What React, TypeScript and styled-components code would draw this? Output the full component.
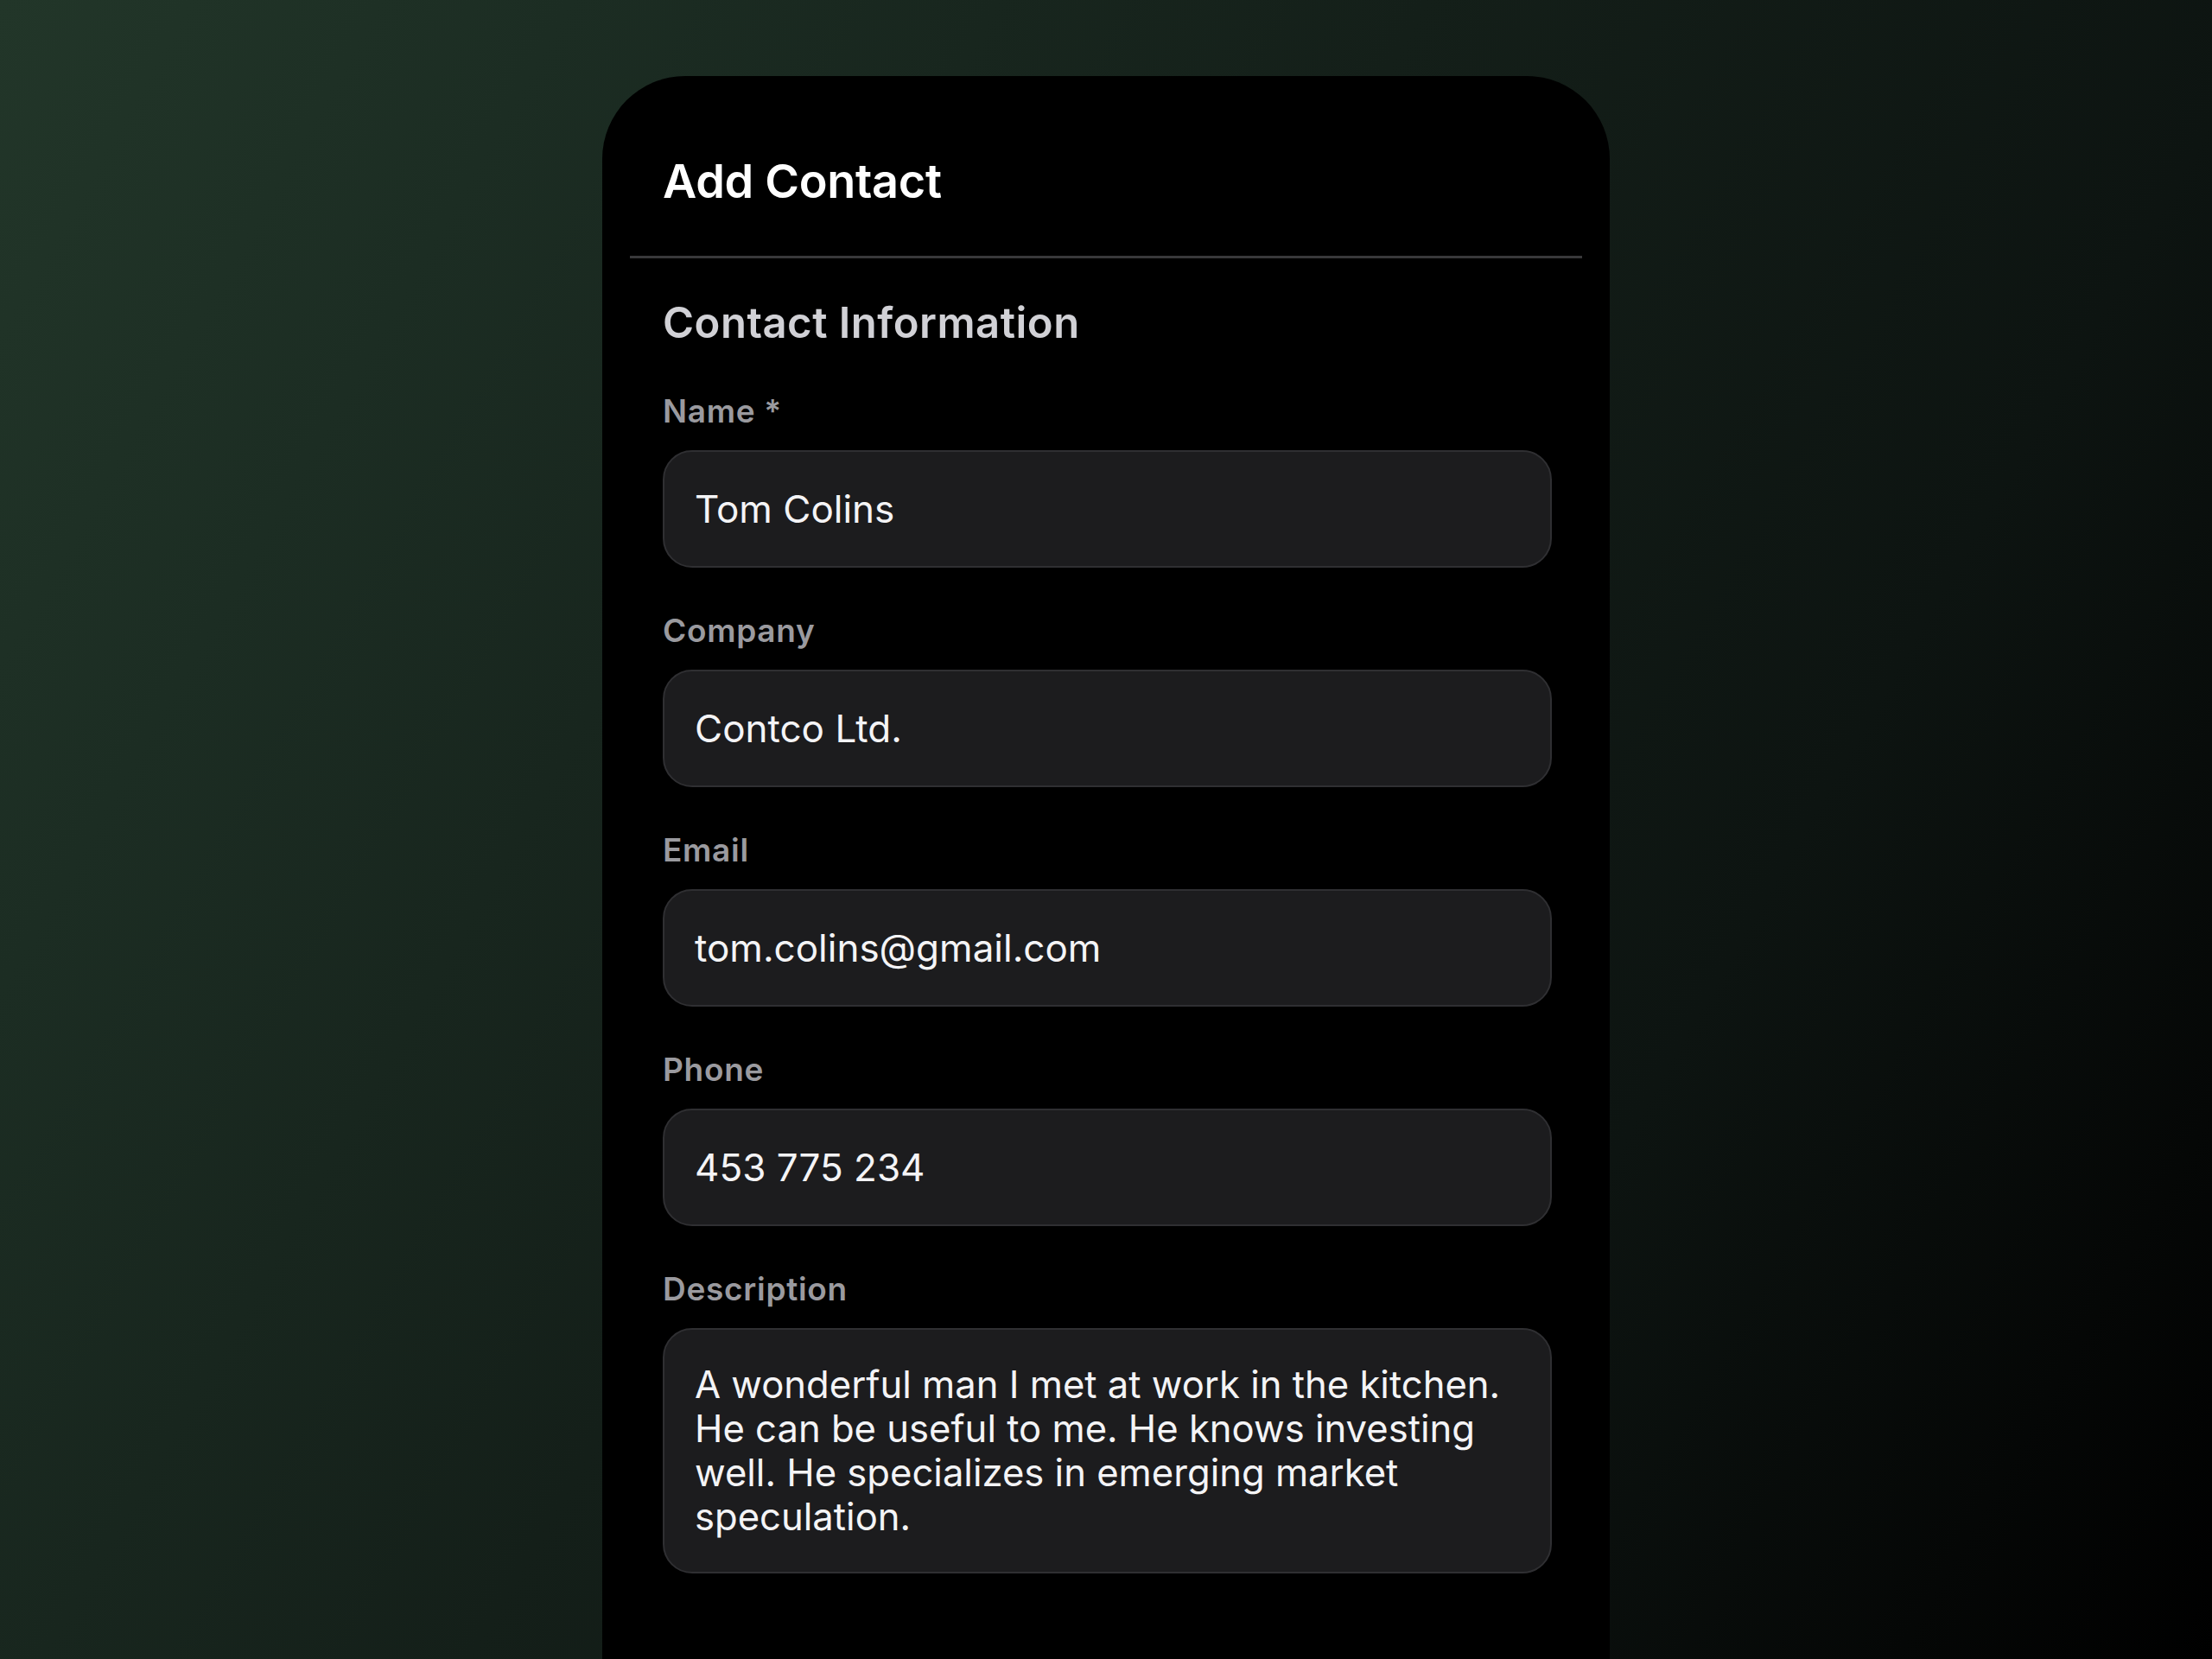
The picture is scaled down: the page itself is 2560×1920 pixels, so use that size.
import React from "react";
import styled, { createGlobalStyle } from "styled-components";

const GlobalStyle = createGlobalStyle`
  html, body {
    margin: 0;
    padding: 0;
    background: #000;
  }
  * { box-sizing: border-box; }
`;

const Stage = styled.div`
  width: 2560px;
  height: 1920px;
  overflow: hidden;
  display: flex;
  justify-content: center;
  align-items: flex-start;
  padding-top: 88px;
  background: linear-gradient(
    120deg,
    #223629 0%,
    #1c2d23 18%,
    #141f19 45%,
    #0d1411 72%,
    #050706 90%,
    #000 100%
  );
  font-family: Inter, "Noto Sans", "Liberation Sans", sans-serif;
  -webkit-font-smoothing: antialiased;
`;

const Card = styled.section`
  width: 1166px;
  min-height: 1900px;
  flex-shrink: 0;
  background: #000;
  border-radius: 96px 96px 0 0;
  display: flex;
  flex-direction: column;
`;

const Header = styled.header`
  padding: 90px 70px 54px;
`;

const Title = styled.h1`
  margin: 0;
  font-size: 54px;
  line-height: 64px;
  font-weight: 600;
  color: #ffffff;
  letter-spacing: -0.3px;
`;

const Divider = styled.hr`
  margin: 0 32px;
  border: none;
  height: 3px;
  background: #38383a;
`;

const Form = styled.div`
  padding: 46px 67px 0 70px;
  display: flex;
  flex-direction: column;
`;

const SectionTitle = styled.h2`
  margin: 0 0 51px;
  font-size: 49px;
  line-height: 58px;
  font-weight: 600;
  color: #d1d1d6;
  letter-spacing: 0.5px;
`;

const Field = styled.div`
  display: flex;
  flex-direction: column;
  gap: 23px;
  margin-bottom: 51px;
`;

const Label = styled.label`
  font-size: 37px;
  line-height: 44px;
  font-weight: 600;
  color: #9a9a9f;
  letter-spacing: 0.7px;
`;

const Box = styled.div<{ $multiline?: boolean }>`
  width: 100%;
  border: 2px solid #2f2f32;
  background: #1c1c1e;
  border-radius: 34px;
  color: #f4f4f6;
  font-weight: 400;
  padding: ${(p) => (p.$multiline ? "38px 35px" : "0 35px")};
  height: ${(p) => (p.$multiline ? "auto" : "136px")};
  display: flex;
  align-items: ${(p) => (p.$multiline ? "flex-start" : "center")};
  font-size: ${(p) => (p.$multiline ? "43.6px" : "44px")};
  line-height: ${(p) => (p.$multiline ? "51px" : "52px")};
  white-space: ${(p) => (p.$multiline ? "normal" : "nowrap")};
`;

type FieldData = { label: string; value: string; multiline?: boolean };

const fields: FieldData[] = [
  { label: "Name *", value: "Tom Colins" },
  { label: "Company", value: "Contco Ltd." },
  { label: "Email", value: "tom.colins@gmail.com" },
  { label: "Phone", value: "453 775 234" },
  {
    label: "Description",
    value:
      "A wonderful man I met at work in the kitchen. He can be useful to me. He knows investing well. He specializes in emerging market speculation.",
    multiline: true,
  },
];

export default function App() {
  return (
    <>
      <GlobalStyle />
      <Stage>
        <Card>
          <Header>
            <Title>Add Contact</Title>
          </Header>
          <Divider />
          <Form>
            <SectionTitle>Contact Information</SectionTitle>
            {fields.map((f) => (
              <Field key={f.label}>
                <Label>{f.label}</Label>
                <Box role="textbox" $multiline={f.multiline}>
                  {f.value}
                </Box>
              </Field>
            ))}
          </Form>
        </Card>
      </Stage>
    </>
  );
}
